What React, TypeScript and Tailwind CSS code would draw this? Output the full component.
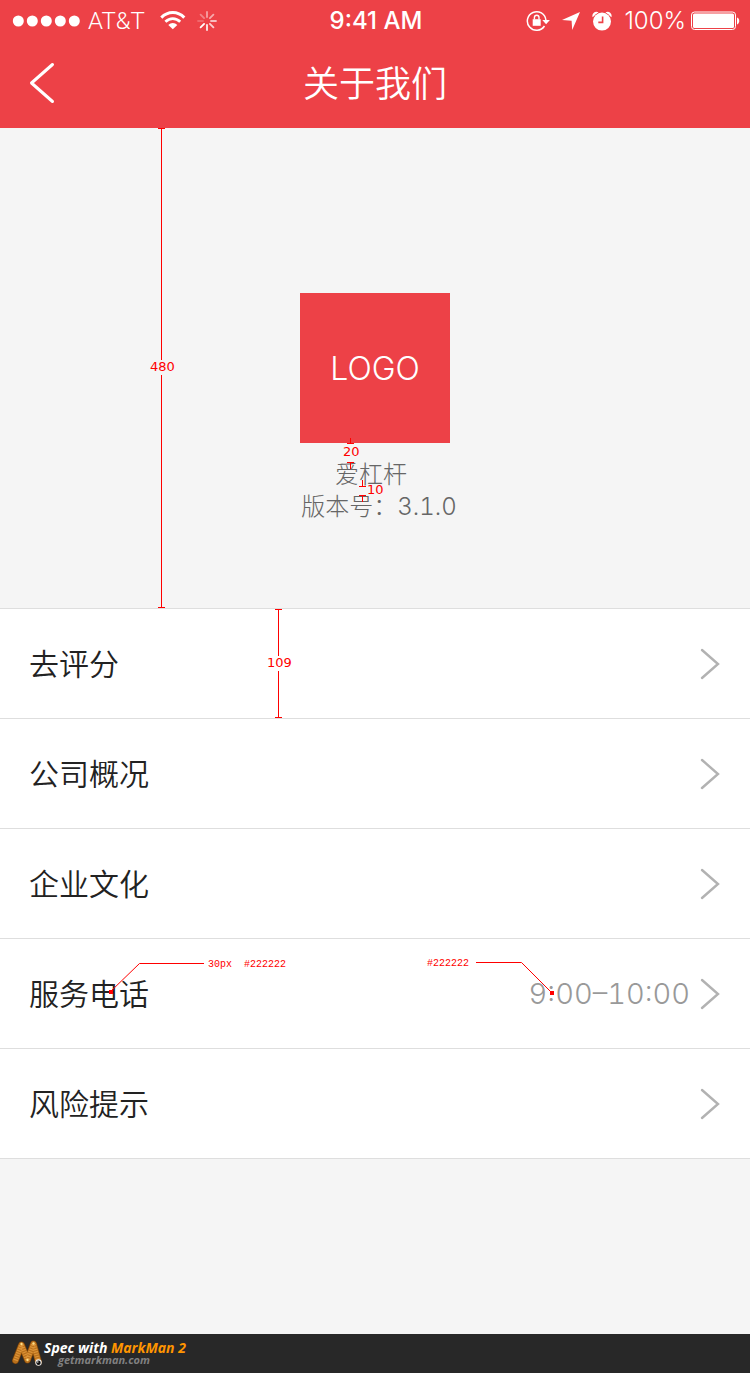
import React from 'react';

const CJK = "font-['Inter','Noto_Sans_CJK_SC',sans-serif]";

function StatusBar() {
  return (
    <div className="flex h-10 items-center justify-between pt-px pr-2.5 pl-3 text-2xl leading-10 text-white">
      <div className="flex flex-1 items-center">
        <svg className="h-3 w-[70px]" viewBox="0 0 70 12" fill="currentColor" aria-hidden="true">
          <circle cx="6.3" cy="6" r="5.5" />
          <circle cx="20.3" cy="6" r="5.5" />
          <circle cx="34.3" cy="6" r="5.5" />
          <circle cx="48.3" cy="6" r="5.5" />
          <circle cx="62.3" cy="6" r="5.5" />
        </svg>
        <span className="ml-1.5 font-['Roboto',sans-serif] font-light">AT&amp;T</span>
        <svg className="ml-3.5 h-5 w-7" viewBox="0 0 28 20" fill="none" stroke="currentColor" aria-hidden="true">
          <path d="M2.3 6.600C9 -.2 18.700 -.2 25.300 6.600" strokeWidth="3" />
          <path d="M6.400 10.800C10.800 6.600 16.800 6.600 21.200 10.800" strokeWidth="2.800" />
          <path d="M9.300 13.900c2.500-2.700 6.500-2.700 9 0L13.800 18.300z" fill="currentColor" stroke="none" />
        </svg>
        <svg className="ml-2.5 h-5 w-5" viewBox="0 0 20 20" stroke="currentColor" strokeWidth="1.800" strokeLinecap="round" aria-hidden="true">
          <path d="M10 1v5" opacity=".5" />
          <path d="M16.400 3.600l-3.500 3.500" opacity=".55" />
          <path d="M14 10h5" opacity=".65" />
          <path d="M12.900 12.900l3.500 3.500" opacity=".75" />
          <path d="M10 14v5" opacity=".9" />
          <path d="M7.100 12.900l-3.500 3.500" />
          <path d="M6 10H1" opacity=".2" />
          <path d="M7.100 7.100L3.600 3.600" opacity=".35" />
        </svg>
      </div>
      <span className="font-['Inter',sans-serif] font-medium">9:41 AM</span>
      <div className="flex flex-1 items-center justify-end">
        <svg className="h-6 w-6" viewBox="0 0 24 24" fill="none" stroke="currentColor" aria-hidden="true">
          <path d="M18.500 17A9.300 9.300 0 1 1 19.900 11" strokeWidth="1.500" />
          <path d="M16.300 11h7.600L20.100 15.300z" fill="currentColor" stroke="none" />
          <path d="M6.700 10.200h8v6.600h-8z" fill="currentColor" stroke="none" />
          <path d="M8.400 10.600V8.500a2.300 2.300 0 0 1 4.600 0V10.600" strokeWidth="1.400" />
        </svg>
        <svg className="ml-3 h-[18px] w-[18px]" viewBox="0 0 18 18" fill="currentColor" aria-hidden="true">
          <path d="M18 0L10.200 18 9.600 8.800 0 8z" />
        </svg>
        <svg className="ml-3 h-5 w-5" viewBox="0 0 20 20" aria-hidden="true">
          <path d="M.6 6.200C-.6 2.600 3 -.6 6.600 1.200zM19.400 6.200C20.600 2.600 17-.6 13.400 1.200z" fill="currentColor" />
          <circle cx="10" cy="10.600" r="9.600" fill="#ed4147" />
          <circle cx="10" cy="10.600" r="9" fill="currentColor" />
          <path d="M10.600 5.400v6H6.300" fill="none" stroke="#ed4147" strokeWidth="1.600" />
        </svg>
        <span className="ml-3 font-['Inter',sans-serif] font-light">100%</span>
        <svg className="ml-1 h-5 w-[50px]" viewBox="0 0 50 20" fill="currentColor" aria-hidden="true">
          <rect x="1.500" y="1" width="44" height="17.500" rx="3" fill="none" stroke="currentColor" />
          <rect x="3" y="2.500" width="41" height="14.500" rx="1.500" />
          <path d="M47 6.500c3 .8 3 6 0 7z" />
        </svg>
      </div>
    </div>
  );
}

function Chevron() {
  return (
    <svg className="h-8 w-5 shrink-0" viewBox="0 0 20 32" fill="none" stroke="#b2b2b2" strokeWidth="2.400" strokeLinecap="round" aria-hidden="true">
      <path d="M2 2L18 16 2 30" />
    </svg>
  );
}

function Row({ label, value, children }: { label: string; value?: string; children?: React.ReactNode }) {
  return (
    <li className="relative border-b border-[#dedede] bg-white">
      <a href="#" className="flex h-[109px] items-center justify-between pt-px pr-[30px] pl-[29px] text-[30px] leading-10 text-[#222222]">
        <span className="font-[350]">{label}</span>
        <span className="flex items-center gap-2.5">
          {value && <span className="text-[29px] font-light tabular-nums text-[#999999]">{value}</span>}
          <Chevron />
        </span>
      </a>
      {children}
    </li>
  );
}

const NOTE = "absolute font-['DejaVu_Sans',sans-serif] text-[13px] leading-4 text-[#ff0000]";
const TAG = "absolute font-['Liberation_Mono',monospace] text-[10px] leading-4 text-[#ff0000]";

export default function App() {
  return (
    <div className={`flex min-h-screen flex-col bg-[#f5f5f5] ${CJK}`}>
      <header className="bg-[#ed4147] text-white">
        <StatusBar />
        <div className="grid h-[88px] grid-cols-[1fr_auto_1fr] items-center px-7">
          <button type="button" aria-label="返回" className="w-7">
            <svg className="h-11 w-7" viewBox="0 0 28 44" fill="none" stroke="currentColor" strokeWidth="3" strokeLinecap="round" strokeLinejoin="round">
              <path d="M24.500 2.500L3.500 21 24.500 39.500" />
            </svg>
          </button>
          <h1 className="text-4xl leading-[48px] font-[350]">关于我们</h1>
        </div>
      </header>

      <main>
        <section className="relative flex h-[480px] flex-col items-center pt-[165px]">
          <div className="flex h-[150px] w-[150px] items-center justify-center bg-[#ed4147] pt-0.5 text-[32px] leading-10 font-light text-white">
            LOGO
          </div>
          <div className="flex flex-col items-center pt-4 pl-2 text-2xl leading-8 font-light text-[#666666]">
            <p className="pr-4">爱杠杆</p>
            <p className="tabular-nums">版本号：3.1.0</p>
          </div>

          <svg className="absolute top-0 left-[157px] h-[480px] w-[9px]" viewBox="0 0 9 480" shapeRendering="crispEdges" fill="#ff0000" aria-hidden="true">
            <path d="M1 0h7v1H1zM4 0h1v232H4zM4 247h1v233H4zM1 479h7v1H1z" />
          </svg>
          <span className={`${NOTE} top-[231px] left-[150px]`}>480</span>
          <svg className="absolute top-[308px] left-[346px] h-[70px] w-6" viewBox="0 0 24 70" shapeRendering="crispEdges" fill="#ff0000" aria-hidden="true">
            <path d="M4 2h1v6H4zM1 7h7v1H1zM1 26h7v1H1zM4 26h1v7H4zM16 44h1v6h-1zM13 50h7v1h-7zM13 59h7v1h-7zM16 59h1v7h-1z" />
          </svg>
          <span className={`${NOTE} top-[316px] left-[343px]`}>20</span>
          <span className={`${NOTE} top-[354px] left-[367px]`}>10</span>
        </section>

        <ul className="border-t border-[#dedede]">
          <Row label="去评分">
            <svg className="absolute top-0 left-[274px] h-[109px] w-[9px]" viewBox="0 0 9 109" shapeRendering="crispEdges" fill="#ff0000" aria-hidden="true">
              <path d="M1 0h7v1H1zM4 0h1v47H4zM4 62h1v47H4zM1 108h7v1H1z" />
            </svg>
            <span className={`${NOTE} top-[46px] left-[267px]`}>109</span>
          </Row>
          <Row label="公司概况" />
          <Row label="企业文化" />
          <Row label="服务电话" value="9:00–10:00">
            <svg className="absolute top-5 left-[106px] h-10 w-[100px]" viewBox="0 0 100 40" fill="none" stroke="#ff0000" aria-hidden="true">
              <path d="M98 4.500H33.500L4 33" />
              <path d="M3 31h4v4H3z" fill="#ff0000" stroke="none" />
            </svg>
            <span className={`${TAG} top-[18px] left-[208px] whitespace-pre`}>30px  #222222</span>
            <span className={`${TAG} top-[17px] left-[427px]`}>#222222</span>
            <svg className="absolute top-5 left-[474px] h-10 w-[84px]" viewBox="0 0 84 40" fill="none" stroke="#ff0000" aria-hidden="true">
              <path d="M2 3.500h45.500L77 33" />
              <path d="M76 32h4v4h-4z" fill="#ff0000" stroke="none" />
            </svg>
          </Row>
          <Row label="风险提示" />
        </ul>
      </main>

      <footer className="mt-auto flex h-[39px] items-center bg-[#282828] pl-3 font-['Open_Sans',sans-serif] text-xs leading-3 font-bold italic">
        <svg className="h-7 w-8" viewBox="0 0 32 28" fill="none" strokeLinecap="round" strokeLinejoin="round" aria-hidden="true">
          <path d="M3.500 20.500L9.500 5l6 15 6-16 5 18" stroke="#6f3c08" strokeWidth="7" />
          <path d="M3.500 20.500L9.500 5l6 15 6-16 5 18" stroke="#b8701c" strokeWidth="5.800" />
          <path d="M3.500 20.500L9.500 5l6 15 6-16 5 18" stroke="#dd9438" strokeWidth="4.600" strokeLinecap="butt" strokeDasharray="1.200 1.200" />
          <circle cx="9.500" cy="4" r="1.200" fill="#ffe08a" />
          <circle cx="21.500" cy="3.500" r="1.200" fill="#ffe08a" />
          <circle cx="15.500" cy="20" r="1.200" fill="#ffe08a" />
          <circle cx="26.500" cy="22.500" r="3.200" fill="#f3f3f3" />
          <circle cx="26.500" cy="22.800" r="2.200" fill="#111111" />
          <circle cx="25.800" cy="22" r=".7" fill="#ffffff" />
        </svg>
        <div>
          <p className="text-sm leading-3 text-white">Spec with <span className="text-[#ff9500]">MarkMan 2</span></p>
          <p className="pl-3.5 text-[11px] leading-3 text-[#808080]">getmarkman.com</p>
        </div>
      </footer>
    </div>
  );
}
